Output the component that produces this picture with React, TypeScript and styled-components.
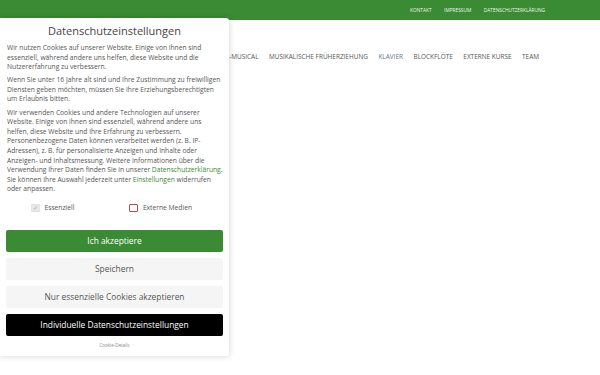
import React from "react";
import styled, { createGlobalStyle } from "styled-components";

const GREEN = "#3a8b34";

const Global = createGlobalStyle`
  html, body { margin: 0; padding: 0; background: #fff; }
  body { font-family: "Open Sans", "Liberation Sans", sans-serif; width: 600px; height: 375px; overflow: hidden; }
  * { box-sizing: border-box; }
`;

const Page = styled.div`
  width: 600px;
  height: 375px;
  position: relative;
  background: #fff;
`;

const TopBar = styled.div`
  height: 20px;
  background: ${GREEN};
  display: flex;
  justify-content: flex-end;
  align-items: center;
  padding-right: 55px;
  gap: 12.5px;
`;

const TopLink = styled.a`
  color: #fff;
  font-size: 4.8px;
  text-transform: uppercase;
  text-decoration: none;
  opacity: 0.92;
`;

const Nav = styled.nav`
  display: flex;
  justify-content: flex-end;
  gap: 10.5px;
  padding: 32px 61px 0 0;
  line-height: 10px;
`;

const NavItem = styled.a<{ $active?: boolean }>`
  font-size: 6.45px;
  color: ${(p) => (p.$active ? "#66788a" : "#555")};
  text-transform: uppercase;
  text-decoration: none;
  white-space: nowrap;
`;

const Modal = styled.div`
  position: absolute;
  left: 0;
  top: 18px;
  width: 229px;
  background: #fff;
  border-radius: 0 3px 3px 0;
  box-shadow: 0 0 6px rgba(0, 0, 0, 0.18);
  padding: 5px 6px 7px 6px;
  color: #555;
`;

const Title = styled.h1`
  margin: 0 0 4px;
  text-align: center;
  font-weight: 400;
  font-size: 11px;
  line-height: 16px;
  color: #444;
`;

const Para = styled.p`
  margin: 0 0 3.5px;
  padding-left: 1px;
  font-size: 6.7px;
  line-height: 9.6px;
  color: #555;
`;

const Link = styled.a`
  color: ${GREEN};
  text-decoration: none;
`;

const Options = styled.div`
  display: flex;
  justify-content: center;
  gap: 55px;
  margin: 9px 0 17px;
  padding-right: 6px;
`;

const Option = styled.label`
  display: flex;
  align-items: center;
  gap: 5px;
  font-size: 6.7px;
  color: #555;
  line-height: 10px;
`;

const Box = styled.span<{ $checked?: boolean }>`
  width: 8.5px;
  height: 8.5px;
  border-radius: 1px;
  display: inline-flex;
  align-items: center;
  justify-content: center;
  border: 1px solid ${(p) => (p.$checked ? "#e2e2e2" : "#b84a4f")};
  background: ${(p) => (p.$checked ? "#e6e6e6" : "#fff")};
  color: #aaa;
  font-size: 6px;
  line-height: 1;
`;

const Buttons = styled.div`
  display: flex;
  flex-direction: column;
  gap: 6px;
`;

const Button = styled.button<{ $variant: "green" | "light" | "dark" }>`
  height: 22px;
  width: 100%;
  border: none;
  border-radius: 2px;
  font-family: inherit;
  font-size: 8.4px;
  cursor: pointer;
  background: ${(p) =>
    p.$variant === "green" ? GREEN : p.$variant === "dark" ? "#000" : "#f5f5f5"};
  color: ${(p) => (p.$variant === "light" ? "#555" : "#fff")};
`;

const Details = styled.div`
  text-align: center;
  font-size: 4.5px;
  color: #888;
  margin-top: 5px;
  line-height: 8px;
`;

export default function App() {
  return (
    <Page>
      <Global />
      <TopBar>
        <TopLink>Kontakt</TopLink>
        <TopLink>Impressum</TopLink>
        <TopLink>Datenschutzerklärung</TopLink>
      </TopBar>
      <Nav>
        <NavItem>Kinder-Musical</NavItem>
        <NavItem>Musikalische Früherziehung</NavItem>
        <NavItem $active>Klavier</NavItem>
        <NavItem>Blockflöte</NavItem>
        <NavItem>Externe Kurse</NavItem>
        <NavItem>Team</NavItem>
      </Nav>
      <Modal>
        <Title>Datenschutzeinstellungen</Title>
        <Para>
          Wir nutzen Cookies auf unserer Website. Einige von ihnen sind essenziell, während andere uns helfen, diese Website und die Nutzererfahrung zu verbessern.
        </Para>
        <Para>
          Wenn Sie unter 16 Jahre alt sind und Ihre Zustimmung zu freiwilligen Diensten geben möchten, müssen Sie Ihre Erziehungsberechtigten um Erlaubnis bitten.
        </Para>
        <Para>
          Wir verwenden Cookies und andere Technologien auf unserer Website. Einige von ihnen sind essenziell, während andere uns helfen, diese Website und Ihre Erfahrung zu verbessern. Personenbezogene Daten können verarbeitet werden (z. B. IP-Adressen), z. B. für personalisierte Anzeigen und Inhalte oder Anzeigen- und Inhaltsmessung. Weitere Informationen über die Verwendung Ihrer Daten finden Sie in unserer <Link>Datenschutzerklärung</Link>. Sie können Ihre Auswahl jederzeit unter <Link>Einstellungen</Link> widerrufen oder anpassen.
        </Para>
        <Options>
          <Option>
            <Box $checked>✓</Box>
            Essenziell
          </Option>
          <Option>
            <Box />
            Externe Medien
          </Option>
        </Options>
        <Buttons>
          <Button $variant="green">Ich akzeptiere</Button>
          <Button $variant="light">Speichern</Button>
          <Button $variant="light">Nur essenzielle Cookies akzeptieren</Button>
          <Button $variant="dark">Individuelle Datenschutzeinstellungen</Button>
        </Buttons>
        <Details>Cookie-Details</Details>
      </Modal>
    </Page>
  );
}
